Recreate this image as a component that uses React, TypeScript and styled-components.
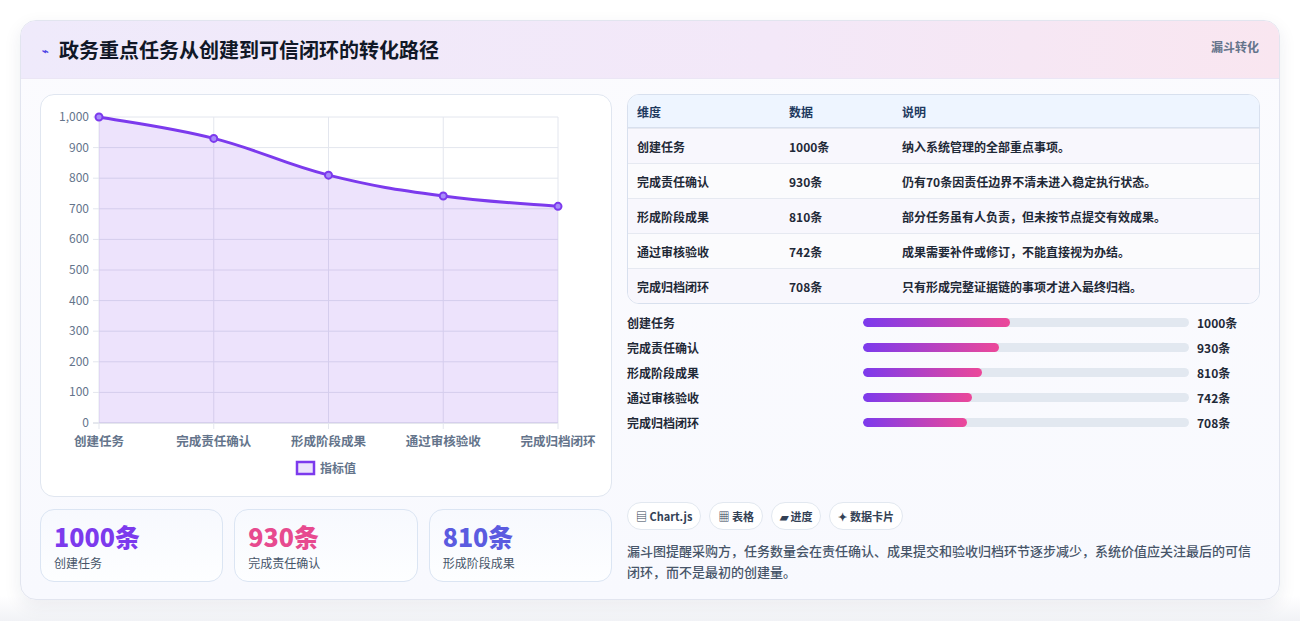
import React from "react";
import styled, { createGlobalStyle } from "styled-components";

const Global = createGlobalStyle`
  html, body { margin: 0; padding: 0; background: #fff; }
  body { font-family: "Noto Sans CJK SC", "Noto Sans", sans-serif; color: #1e293b; }
`;

const Page = styled.div`
  padding: 20px 20px 20px 20px;
  height: 621px;
  box-sizing: border-box;
  background: linear-gradient(180deg, #fff 0%, #fff 96%, #f1f2f6 100%);
`;

const Card = styled.div`
  width: 1260px;
  height: 580px;
  box-sizing: border-box;
  border: 1px solid #e2e5ef;
  border-radius: 16px;
  background: linear-gradient(180deg, #fbfbfe, #f8f9fe);
  box-shadow: 0 6px 18px rgba(30, 41, 80, 0.08);
  overflow: hidden;
  display: flex;
  flex-direction: column;
`;

const Header = styled.div`
  height: 57px;
  flex: none;
  display: flex;
  align-items: center;
  justify-content: space-between;
  padding: 0 20px 0 21px;
  background: linear-gradient(90deg, #efeafb 0%, #f3e8f8 60%, #f9e6f0 100%);
  border-bottom: 1px solid #ebe6f5;
`;

const Title = styled.h1`
  margin: 0;
  font-size: 20px;
  font-weight: 700;
  color: #111827;
  display: flex;
  align-items: center;
  gap: 10px;
`;

const Spark = styled.span`
  font-size: 11px;
  color: #4f46e5;
`;

const Badge = styled.span`
  font-size: 12px;
  font-weight: 700;
  color: #64748b;
  align-self: flex-start;
  margin-top: 17px;
`;

const Body = styled.div`
  display: grid;
  grid-template-columns: 572px 633px;
  gap: 15px;
  padding: 15px 19px 18px 19px;
  flex: 1;
`;

const Col = styled.div`
  display: flex;
  flex-direction: column;
`;

const ChartCard = styled.div`
  height: 403px;
  border: 1px solid #e0e6f0;
  border-radius: 14px;
  background: #fff;
  box-sizing: border-box;
  overflow: hidden;
`;

const Stats = styled.div`
  margin-top: 12px;
  display: grid;
  grid-template-columns: repeat(3, 1fr);
  gap: 11px;
`;

const Stat = styled.div`
  height: 73px;
  box-sizing: border-box;
  border: 1px solid #dbe5f3;
  border-radius: 14px;
  background: linear-gradient(180deg, #f7f9fe, #fdfeff);
  padding: 10px 13px;
`;

const StatValue = styled.div<{ $c: string }>`
  font-size: 25px;
  font-weight: 800;
  color: ${(p) => p.$c};
  line-height: 32px;
`;

const StatLabel = styled.div`
  font-size: 12px;
  color: #475569;
  margin-top: 2px;
`;

const Table = styled.table`
  width: 100%;
  border-collapse: separate;
  border-spacing: 0;
  border: 1px solid #d8e0ee;
  border-radius: 12px;
  overflow: hidden;
  font-size: 12px;
  background: #fff;
`;

const Th = styled.th<{ $w?: number }>`
  text-align: left;
  font-weight: 700;
  color: #1e3a5f;
  background: #eef5ff;
  height: 32px;
  padding: 0 9px;
  border-bottom: 1px solid #d8e0ee;
  width: ${(p) => (p.$w ? p.$w + "px" : "auto")};
`;

const Td = styled.td<{ $odd: boolean }>`
  height: 34px;
  padding: 0 9px;
  font-weight: 600;
  color: #1f2937;
  background: ${(p) => (p.$odd ? "#f8f7fd" : "#fbfbfd")};
  border-top: 1px solid #e6e9f1;
`;

const Bars = styled.div`
  display: flex;
  flex-direction: column;
  gap: 7px;
  margin-top: 9px;
`;

const BarRow = styled.div`
  display: grid;
  grid-template-columns: 228px 326px 1fr;
  gap: 8px;
  align-items: center;
  font-size: 12px;
  font-weight: 600;
  height: 18px;
  color: #1f2937;
`;

const Track = styled.div`
  height: 9px;
  border-radius: 5px;
  background: #e2e8f0;
  overflow: hidden;
`;

const Fill = styled.div`
  height: 100%;
  border-radius: 5px;
  background: linear-gradient(90deg, #7c3aed, #ec4899);
`;

const Chips = styled.div`
  margin-top: auto;
  display: flex;
  gap: 8px;
`;

const Chip = styled.span`
  height: 28px;
  box-sizing: border-box;
  padding: 0 8px;
  border: 1px solid #e2e8f0;
  border-radius: 14px;
  background: #fff;
  font-size: 11px;
  font-weight: 700;
  color: #334155;
  display: inline-flex;
  align-items: center;
  gap: 3px;
`;

const Note = styled.p`
  margin: 10px 0 0;
  font-size: 13px;
  line-height: 21px;
  color: #475569;
  font-weight: 500;
`;

const data = [
  { name: "创建任务", v: 1000, d: "纳入系统管理的全部重点事项。" },
  { name: "完成责任确认", v: 930, d: "仍有70条因责任边界不清未进入稳定执行状态。" },
  { name: "形成阶段成果", v: 810, d: "部分任务虽有人负责，但未按节点提交有效成果。" },
  { name: "通过审核验收", v: 742, d: "成果需要补件或修订，不能直接视为办结。" },
  { name: "完成归档闭环", v: 708, d: "只有形成完整证据链的事项才进入最终归档。" },
];

function Chart() {
  const L = 58, R = 517, T = 22, B = 328;
  const xs = data.map((_, i) => L + (i * (R - L)) / 4);
  const ys = data.map((d) => B - (d.v / 1000) * (B - T));
  let path = `M${xs[0]},${ys[0]}`;
  for (let i = 0; i < 4; i++) {
    const p0 = i > 0 ? [xs[i - 1], ys[i - 1]] : [xs[i], ys[i]];
    const p1 = [xs[i], ys[i]];
    const p2 = [xs[i + 1], ys[i + 1]];
    const p3 = i < 3 ? [xs[i + 2], ys[i + 2]] : p2;
    const t = 0.4 / 2;
    const c1 = [p1[0] + (p2[0] - p0[0]) * t, p1[1] + (p2[1] - p0[1]) * t];
    const c2 = [p2[0] - (p3[0] - p1[0]) * t, p2[1] - (p3[1] - p1[1]) * t];
    path += ` C${c1[0]},${c1[1]} ${c2[0]},${c2[1]} ${p2[0]},${p2[1]}`;
  }
  const area = `${path} L${R},${B} L${L},${B} Z`;
  const font = `"Noto Sans CJK SC", "Liberation Sans", sans-serif`;
  return (
    <svg width="572" height="403" fontFamily={font}>
      {Array.from({ length: 11 }, (_, i) => {
        const y = B - (i * (B - T)) / 10;
        return (
          <g key={i}>
            <line x1={L - 6} x2={R} y1={y} y2={y} stroke={i === 0 ? "#cbd0dc" : "#e3e6ee"} />
            <text x={L - 10} y={y + 4} fontSize="12" fill="#64748b" textAnchor="end">
              {i === 10 ? "1,000" : i * 100}
            </text>
          </g>
        );
      })}
      {xs.map((x, i) => (
        <g key={i}>
          <line x1={x} x2={x} y1={T} y2={B + 6} stroke="#e3e6ee" />
          <text x={x} y={B + 23} fontSize="12.5" fontWeight="600" fill="#64748b" textAnchor="middle">
            {data[i].name}
          </text>
        </g>
      ))}
      <path d={area} fill="rgba(124,58,237,0.14)" />
      <path d={path} fill="none" stroke="#7c3aed" strokeWidth="3" />
      {xs.map((x, i) => (
        <circle key={i} cx={x} cy={ys[i]} r="3.5" fill="#a78bfa" stroke="#7c3aed" strokeWidth="2" />
      ))}
      <rect x="256" y="367" width="17" height="12" fill="#ece4fb" stroke="#7c3aed" strokeWidth="2.5" />
      <text x="279" y="378" fontSize="12" fontWeight="600" fill="#64748b">指标值</text>
    </svg>
  );
}

export default function App() {
  const colors = ["#7c3aed", "#e74a8f", "#5b5be0"];
  return (
    <Page>
      <Global />
      <Card>
        <Header>
          <Title><Spark>⌁</Spark>政务重点任务从创建到可信闭环的转化路径</Title>
          <Badge>漏斗转化</Badge>
        </Header>
        <Body>
          <Col>
            <ChartCard><Chart /></ChartCard>
            <Stats>
              {data.slice(0, 3).map((d, i) => (
                <Stat key={d.name}>
                  <StatValue $c={colors[i]}>{d.v}条</StatValue>
                  <StatLabel>{d.name}</StatLabel>
                </Stat>
              ))}
            </Stats>
          </Col>
          <Col>
            <Table>
              <thead>
                <tr><Th $w={134}>维度</Th><Th $w={95}>数据</Th><Th>说明</Th></tr>
              </thead>
              <tbody>
                {data.map((d, i) => (
                  <tr key={d.name}>
                    <Td $odd={i % 2 === 0}>{d.name}</Td>
                    <Td $odd={i % 2 === 0}>{d.v}条</Td>
                    <Td $odd={i % 2 === 0}>{d.d}</Td>
                  </tr>
                ))}
              </tbody>
            </Table>
            <Bars>
              {data.map((d) => (
                <BarRow key={d.name}>
                  <span>{d.name}</span>
                  <Track><Fill style={{ width: `${(d.v / 1000) * 45}%` }} /></Track>
                  <span>{d.v}条</span>
                </BarRow>
              ))}
            </Bars>
            <Chips>
              <Chip>▤ Chart.js</Chip>
              <Chip>▦ 表格</Chip>
              <Chip>▰ 进度</Chip>
              <Chip>✦ 数据卡片</Chip>
            </Chips>
            <Note>漏斗图提醒采购方，任务数量会在责任确认、成果提交和验收归档环节逐步减少，系统价值应关注最后的可信闭环，而不是最初的创建量。</Note>
          </Col>
        </Body>
      </Card>
    </Page>
  );
}
